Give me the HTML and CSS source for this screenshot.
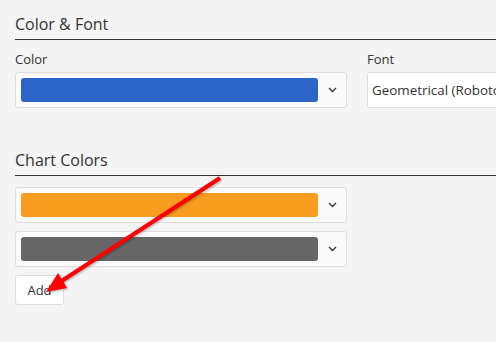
FILE: index.html
```html
<!DOCTYPE html>
<html lang="en">

<head>
    <meta charset="UTF-8">
    <meta name="viewport" content="width=device-width, initial-scale=1.0">
    <title>Theme Settings</title>
    <link rel="stylesheet" href="styles.css">
</head>

<body>
    <div class="section first">
        <h2 class="section-title">Color &amp; Font</h2>
        <div class="row">
            <div class="field">
                <div class="field-label">Color</div>
                <div class="picker">
                    <div class="swatch swatch-blue"></div>
                    <div class="caret">
                        <svg width="9" height="6" viewBox="0 0 9 6"><polyline points="1,1 4.5,4.5 8,1" /></svg>
                    </div>
                </div>
            </div>
            <div class="field">
                <div class="field-label">Font</div>
                <div class="select">Geometrical (Roboto, Open Sans)</div>
            </div>
        </div>
    </div>

    <div class="section">
        <h2 class="section-title">Chart Colors</h2>
        <div class="chart-list">
            <div class="picker">
                <div class="swatch swatch-orange"></div>
                <div class="caret">
                    <svg width="9" height="6" viewBox="0 0 9 6"><polyline points="1,1 4.5,4.5 8,1" /></svg>
                </div>
            </div>
            <div class="picker">
                <div class="swatch swatch-gray"></div>
                <div class="caret">
                    <svg width="9" height="6" viewBox="0 0 9 6"><polyline points="1,1 4.5,4.5 8,1" /></svg>
                </div>
            </div>
            <div class="add-btn">Add</div>
        </div>
    </div>

    <!-- annotation arrow -->
    <svg class="arrow" width="496" height="342" viewBox="0 0 496 342">
        <line x1="220" y1="178" x2="60" y2="282" />
        <polygon points="46,292 58,273 67,288" />
    </svg>
</body>

</html>
```

FILE: styles.css
```css
body {
    margin: 0;
    background-color: #f4f4f4;
    color: #333;
    font-family: "Open Sans", "Liberation Sans", sans-serif;
    overflow: hidden;
    width: 496px;
    height: 342px;
    position: relative;
}

.section {
    padding-left: 15px;
    margin-top: 40px;
}

.section.first {
    margin-top: 12px;
}

.section-title {
    margin: 0;
    font-size: 16px;
    font-weight: normal;
    line-height: 24px;
    padding-bottom: 3px;
    border-bottom: 1px solid #333;
    width: 600px;
}

.row {
    display: flex;
    gap: 20px;
    margin-top: 10px;
}

.field {
    flex: 0 0 332px;
}

.field-label {
    font-size: 13px;
    line-height: 18px;
    margin-bottom: 4px;
}

.picker {
    display: flex;
    align-items: center;
    width: 332px;
    height: 36px;
    box-sizing: border-box;
    padding: 5px 0 5px 5px;
    background-color: #fafafa;
    border: 1px solid #ddd;
    border-radius: 3px;
}

.swatch {
    width: 297px;
    height: 24px;
    border-radius: 3px;
}

.swatch-blue {
    background-color: #2d64c8;
}

.swatch-orange {
    background-color: #f99d21;
}

.swatch-gray {
    background-color: #666;
}

.caret {
    flex: 1;
    display: flex;
    justify-content: center;
    align-items: center;
}

.caret svg polyline {
    fill: none;
    stroke: #333;
    stroke-width: 1.3;
}

.select {
    width: 332px;
    height: 36px;
    box-sizing: border-box;
    padding-left: 4px;
    background-color: #fff;
    border: 1px solid #ddd;
    border-radius: 3px;
    font-size: 13.4px;
    line-height: 34px;
    white-space: nowrap;
    overflow: hidden;
}

.chart-list {
    display: flex;
    flex-direction: column;
    align-items: flex-start;
    gap: 8px;
    margin-top: 11px;
}

.add-btn {
    width: 49px;
    height: 30px;
    box-sizing: border-box;
    background-color: #fff;
    border: 1px solid #ddd;
    border-radius: 3px;
    font-size: 13px;
    line-height: 28px;
    text-align: center;
}

.arrow {
    position: absolute;
    left: 0;
    top: 0;
    filter: drop-shadow(1px 1px 1px rgba(0, 0, 0, 0.3));
}

.arrow line {
    stroke: #f00;
    stroke-width: 4;
}

.arrow polygon {
    fill: #f00;
}
```
